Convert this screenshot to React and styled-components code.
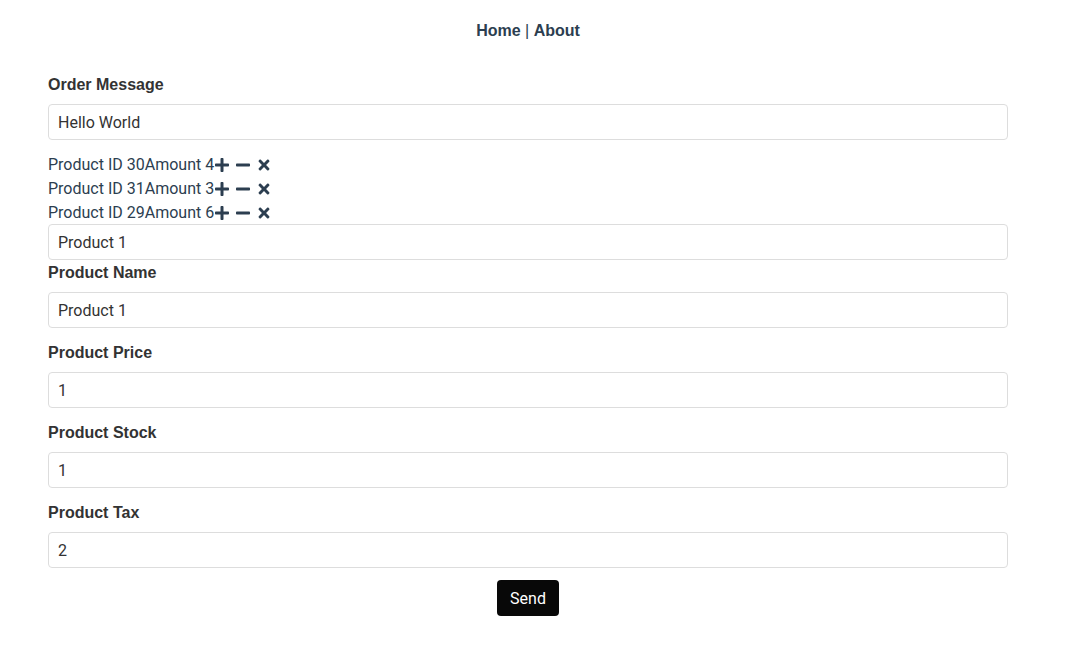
// App.jsx - Order form with product list
import { FaMinus, FaPlus, FaTimes } from "react-icons/fa";
import styled, { createGlobalStyle } from "styled-components";

const items = [
  { id: 30, amount: 4 },
  { id: 31, amount: 3 },
  { id: 29, amount: 6 },
];

const fields = [
  { label: "Product Name", value: "Product 1" },
  { label: "Product Price", value: "1" },
  { label: "Product Stock", value: "1" },
  { label: "Product Tax", value: "2" },
];

export default function App() {
  return (
    <>
      <GlobalStyle />
      <Page>
        <Nav>
          <NavLink>Home</NavLink> | <NavLink>About</NavLink>
        </Nav>

        <Form>
          <Field>
            <Label>Order Message</Label>
            <Input defaultValue="Hello World" />
          </Field>

          {/* Order lines */}
          <Lines>
            {items.map((item) => (
              <Line key={item.id}>
                Product ID {item.id}Amount {item.amount}
                <Icons>
                  <FaPlus />
                  <FaMinus />
                  <FaTimes />
                </Icons>
              </Line>
            ))}
          </Lines>

          <Input defaultValue="Product 1" />

          {fields.map((field, index) => (
            <Field key={field.label} $last={index === fields.length - 1}>
              <Label>{field.label}</Label>
              <Input defaultValue={field.value} />
            </Field>
          ))}

          <SendButton>Send</SendButton>
        </Form>
      </Page>
    </>
  );
}

const GlobalStyle = createGlobalStyle`
  body {
    margin: 8px;
    background: #fff;
    color: #2c3e50;
    font-family: "Liberation Sans", Arial, sans-serif;
  }
`;

const Page = styled.div`
  width: 960px;
  margin-left: 40px;
  display: flex;
  flex-direction: column;
`;

const Nav = styled.nav`
  padding: 11px 10px 9px;
  text-align: center;
  font-size: 16px;
  line-height: 24px;
  color: #2c3e50;
`;

const NavLink = styled.a`
  font-weight: 700;
  color: #2c3e50;
`;

const Form = styled.form`
  margin-top: 20px;
  display: flex;
  flex-direction: column;
  align-items: stretch;
`;

const Field = styled.div`
  display: flex;
  flex-direction: column;
  gap: 8px;
  margin-bottom: ${({ $last }) => ($last ? "12px" : "0")};

  & + & {
    margin-top: 12px;
  }
`;

const Label = styled.label`
  height: 24px;
  font-size: 16px;
  line-height: 26px;
  font-weight: 700;
  color: #333;
`;

const Input = styled.input`
  box-sizing: border-box;
  height: 36px;
  padding: 0 9px;
  border: 1px solid #ddd;
  border-radius: 4px;
  font-family: Roboto, sans-serif;
  font-size: 16px;
  color: #333;
  outline: none;
`;

const Lines = styled.div`
  margin-top: 12px;
  display: flex;
  flex-direction: column;
`;

const Line = styled.div`
  box-sizing: border-box;
  height: 24px;
  padding-top: 2px;
  display: flex;
  align-items: center;
  font-family: Roboto, sans-serif;
  font-size: 16px;
  line-height: 24px;
  color: #2c3e50;
`;

const Icons = styled.span`
  display: flex;
  align-items: center;
  gap: 5px;
  font-size: 16px;
  color: #2c3e50;
`;

const SendButton = styled.button`
  align-self: center;
  height: 36px;
  padding: 0 13px;
  border: none;
  border-radius: 4px;
  background: #080808;
  color: #fff;
  font-family: Roboto, sans-serif;
  font-size: 16px;
  cursor: pointer;
`;
